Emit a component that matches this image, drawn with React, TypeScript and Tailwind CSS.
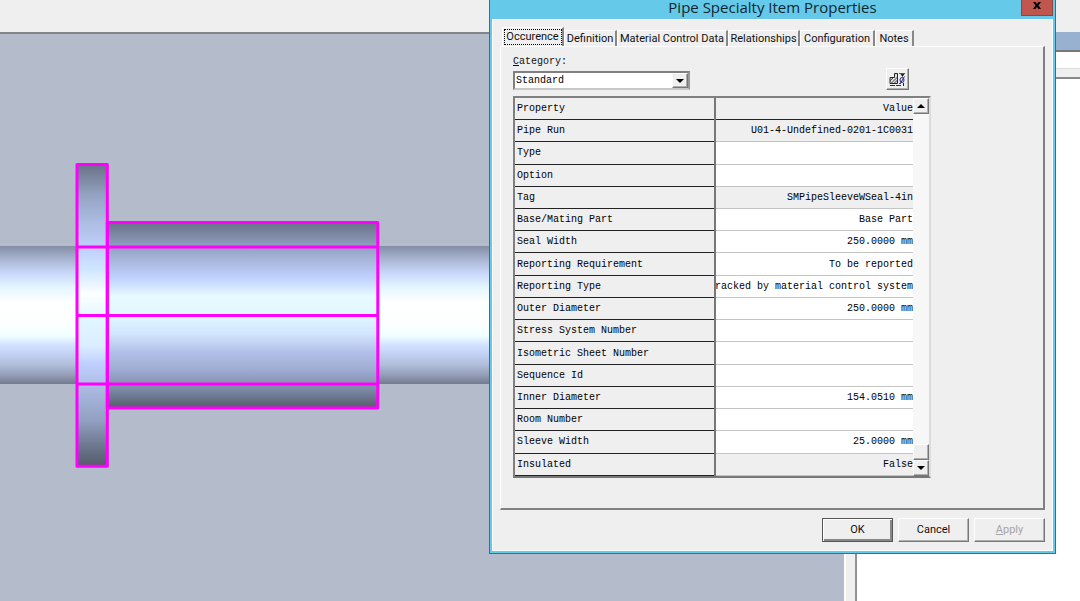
import React, { useState } from "react";

type CellKind = "readonly" | "text" | "choice";

interface PropertyRow {
  name: string;
  value: string;
  kind: CellKind;
}

const TABS = [
  { name: "Occurence", width: "w-[62px]" },
  { name: "Definition", width: "w-[53px]" },
  { name: "Material Control Data", width: "w-[111px]" },
  { name: "Relationships", width: "w-[72px]" },
  { name: "Configuration", width: "w-[75px]" },
  { name: "Notes", width: "w-[39px]" },
];

const ROWS: PropertyRow[] = [
  { name: "Pipe Run", value: "U01-4-Undefined-0201-1C0031", kind: "readonly" },
  { name: "Type", value: "", kind: "text" },
  { name: "Option", value: "", kind: "text" },
  { name: "Tag", value: "SMPipeSleeveWSeal-4in", kind: "readonly" },
  { name: "Base/Mating Part", value: "Base Part", kind: "choice" },
  { name: "Seal Width", value: "250.0000 mm", kind: "text" },
  { name: "Reporting Requirement", value: "To be reported", kind: "choice" },
  {
    name: "Reporting Type",
    value: "tracked by material control system",
    kind: "choice",
  },
  { name: "Outer Diameter", value: "250.0000 mm", kind: "text" },
  { name: "Stress System Number", value: "", kind: "text" },
  { name: "Isometric Sheet Number", value: "", kind: "text" },
  { name: "Sequence Id", value: "", kind: "text" },
  { name: "Inner Diameter", value: "154.0510 mm", kind: "text" },
  { name: "Room Number", value: "", kind: "text" },
  { name: "Sleeve Width", value: "25.0000 mm", kind: "text" },
  { name: "Insulated", value: "False", kind: "readonly" },
];

const MONO = "font-['Liberation_Mono',monospace] text-[10px]";
const RAISED =
  "border border-t-white border-l-white border-r-[#777] border-b-[#777] shadow-[inset_-1px_-1px_0_#b0b0b0]";

const Stops = ({ list }: { list: [number, string][] }) => (
  <>
    {list.map(([offset, color]) => (
      <stop key={offset} offset={offset} stopColor={color} />
    ))}
  </>
);

// Pipe with the selected sleeve and its seal plate
const PipeView = () => (
  <svg className="block h-full w-full" aria-label="Pipe sleeve model">
    <defs>
      <linearGradient id="pipe" x1="0" y1="0" x2="0" y2="1">
        <Stops
          list={[
            [0, "#858da5"],
            [0.1, "#aab6d3"],
            [0.2, "#cad8fb"],
            [0.3, "#e4f6fe"],
            [0.41, "#ffffff"],
            [0.57, "#fcffff"],
            [0.65, "#f0ffff"],
            [0.72, "#d3e1ff"],
            [0.78, "#c3d2f4"],
            [0.86, "#b0bddb"],
            [0.94, "#939bb4"],
            [1, "#737a91"],
          ]}
        />
      </linearGradient>
      <linearGradient id="sleeve" x1="0" y1="0" x2="0" y2="1">
        <Stops
          list={[
            [0, "#677086"],
            [0.12, "#8d9bbb"],
            [0.2, "#a7b5d9"],
            [0.3, "#c0d1ff"],
            [0.4, "#e6fbff"],
            [0.5, "#e0f8fe"],
            [0.6, "#d3e5ff"],
            [0.7, "#b2c0e9"],
            [0.8, "#9daad0"],
            [0.9, "#7c89a5"],
            [1, "#555b6a"],
          ]}
        />
      </linearGradient>
      <linearGradient id="plate" x1="0" y1="0" x2="0" y2="1">
        <Stops
          list={[
            [0, "#677085"],
            [0.1, "#93a2c1"],
            [0.2, "#aebee5"],
            [0.28, "#bfd0fb"],
            [0.35, "#d0e6ff"],
            [0.43, "#fcffff"],
            [0.52, "#e0f6fe"],
            [0.6, "#dceeff"],
            [0.66, "#c0d0ff"],
            [0.75, "#a8b8df"],
            [0.85, "#919fc1"],
            [0.93, "#6e7990"],
            [1, "#545b69"],
          ]}
        />
      </linearGradient>
    </defs>
    <g transform="translate(0 -34)">
      <rect x="0" y="246" width="100%" height="138" fill="url(#pipe)" />
      <rect x="107" y="222" width="271" height="186" fill="url(#sleeve)" />
      <rect x="77" y="164" width="30" height="302" fill="url(#plate)" />
      <g fill="none" stroke="#ff00ff" strokeWidth="3" strokeLinejoin="round">
        <rect x="77" y="164.5" width="30.3" height="301.8" />
        <rect x="107.3" y="222.5" width="270.5" height="185.5" />
        <path d="M77 247H378M77 315.4H378M77 384H378" />
      </g>
    </g>
  </svg>
);

const Arrow = ({ down }: { down?: boolean }) => (
  <svg width="8" height="4" viewBox="0 0 8 4" aria-hidden="true">
    <path d={down ? "M0 0H8L4 4Z" : "M0 4H8L4 0Z"} fill="#000" />
  </svg>
);

const SectionIcon = () => (
  <svg width="17" height="15" viewBox="0 0 17 15" aria-hidden="true">
    <path d="M1 11.500V5.500H5.500V1.500H8.500V11.500Z" fill="#ddd" stroke="#222" />
    <path
      d="M1 9L4.500 5.500M2 11.500L8.500 5M5 11.500L8.500 8"
      stroke="#444"
      fill="none"
    />
    <path d="M10 1.500H16M10 11.500H12" stroke="#555" fill="none" />
    <path d="M11.500 2H15.500L13.500 5Z" fill="#222" />
    <ellipse cx="13" cy="8" rx="2" ry="2.500" fill="none" stroke="#22228a" />
    <path d="M11 12L15.500 4.500" stroke="#22228a" />
    <path d="M1 13.500H12" stroke="#22228a" strokeDasharray="5 1" />
    <path d="M14.500 11V14" stroke="#222" />
  </svg>
);

const ValueCell = ({ row }: { row: PropertyRow }) => {
  const [value, setValue] = useState(row.value);

  if (row.kind === "text") {
    return (
      <input
        type="text"
        aria-label={row.name}
        value={value}
        onChange={(e) => setValue(e.target.value)}
        className="block w-full bg-transparent text-right outline-none"
      />
    );
  }
  if (row.kind === "choice") {
    return (
      <button
        type="button"
        aria-label={row.name}
        className="flex w-full justify-end overflow-hidden whitespace-nowrap"
      >
        {value}
      </button>
    );
  }
  return <div className="text-right whitespace-nowrap">{value}</div>;
};

const PropertyGrid = () => (
  <div className="flex w-[418px] border-2 border-t-[#808080] border-l-[#808080] border-r-[#dcdcdc] border-b-[#777] bg-[#efefef]">
    <div className="min-w-0 flex-1">
      <table
        className={`h-[378px] w-full table-fixed border-collapse leading-[14px] text-black ${MONO}`}
      >
        <colgroup>
          <col className="w-[200px]" />
          <col />
        </colgroup>
        <tbody>
          <tr className="border-b border-[#222]">
            <th
              scope="col"
              className="border-r-2 border-[#777] p-0 pt-px pl-[2px] text-left font-normal"
            >
              Property
            </th>
            <th scope="col" className="p-0 pt-px text-right font-normal">
              Value
            </th>
          </tr>
          {ROWS.map((row) => (
            <tr key={row.name}>
              <th
                scope="row"
                className="border-r-2 border-b border-r-[#777] border-b-[#222] p-0 pt-px pl-[2px] text-left font-normal whitespace-nowrap"
              >
                {row.name}
              </th>
              <td
                className={`border-b border-[#c4c4c4] p-0 pt-px ${
                  row.kind === "readonly" ? "bg-[#efefef]" : "bg-white"
                }`}
              >
                <ValueCell row={row} />
              </td>
            </tr>
          ))}
        </tbody>
      </table>
    </div>
    <div className="flex w-4 flex-col bg-[#f7f7f7]">
      <button
        type="button"
        aria-label="Scroll up"
        className={`flex h-4 items-center justify-center bg-[#efefef] ${RAISED}`}
      >
        <Arrow />
      </button>
      <div className="flex-1" />
      <div className={`h-4 bg-[#efefef] ${RAISED}`} />
      <button
        type="button"
        aria-label="Scroll down"
        className={`flex h-4 items-center justify-center bg-[#efefef] ${RAISED}`}
      >
        <Arrow down />
      </button>
    </div>
  </div>
);

const PropertiesDialog = () => {
  const [activeTab, setActiveTab] = useState("Occurence");
  const [category, setCategory] = useState("Standard");

  return (
    <section
      role="dialog"
      aria-labelledby="dialog-title"
      className="absolute top-0 left-[489px] w-[567px] border border-t-0 border-[#466c7c] bg-[#65c9ea] px-[2px] pb-[2px] font-['Roboto','Noto_Sans',sans-serif] text-[11px] text-[#111]"
    >
      <header className="relative flex h-[19px] justify-center">
        <h1
          id="dialog-title"
          className="font-['Open_Sans',sans-serif] text-[15px] leading-[15px] text-[#10262e]"
        >
          Pipe Specialty Item Properties
        </h1>
        <button
          type="button"
          aria-label="Close"
          className="absolute top-0 right-0 flex h-4 w-8 items-start justify-center border border-t-0 border-[#8f4640] bg-[#c1564f] pt-[2px]"
        >
          <svg width="8" height="7" viewBox="0 0 8 7" aria-hidden="true">
            <path d="M0 0H2.5L4 2L5.500 0H8L5.500 3.500L8 7H5.500L4 5L2.500 7H0L2.500 3.500Z" />
          </svg>
        </button>
      </header>

      <div className="border border-white bg-[#efefef] pt-[7px] pr-[7px] pb-2 pl-[7px]">
        <div role="tablist" className="flex h-[19px] items-end pl-[2px]">
          {TABS.map((tab) => (
            <button
              key={tab.name}
              type="button"
              role="tab"
              aria-selected={tab.name === activeTab}
              onClick={() => setActiveTab(tab.name)}
              className={`flex items-center justify-center border-t border-l border-r-2 border-t-white border-l-white border-r-[#888] leading-[14px] whitespace-nowrap ${
                tab.width
              } ${tab.name === activeTab ? "h-[19px]" : "h-4"}`}
            >
              {tab.name === activeTab ? (
                <span className="flex h-4 w-[58px] items-center justify-center border border-dotted border-black">
                  {tab.name}
                </span>
              ) : (
                tab.name
              )}
            </button>
          ))}
        </div>

        <div
          role="tabpanel"
          className="border-t border-r-2 border-b-2 border-l border-t-white border-r-[#808080] border-b-[#808080] border-l-white pt-2 pb-[30px] pl-3"
        >
          <div className="flex w-[418px] items-end justify-between pb-[6px]">
            <div>
              <label
                htmlFor="category"
                className={`block pb-[3px] leading-[13px] ${MONO}`}
              >
                <u>C</u>ategory:
              </label>
              <div className="relative w-[177px]">
                <select
                  id="category"
                  value={category}
                  onChange={(e) => setCategory(e.target.value)}
                  className={`block h-[19px] w-full appearance-none rounded-none border-2 border-t-[#808080] border-r-[#999] border-b-[#c8c8c8] border-l-[#808080] bg-white pl-px leading-[14px] text-black ${MONO}`}
                >
                  <option>Standard</option>
                </select>
                <span
                  className={`pointer-events-none absolute top-[2px] right-[2px] flex h-[15px] w-4 items-center justify-center bg-[#efefef] ${RAISED}`}
                >
                  <Arrow down />
                </span>
              </div>
            </div>
            <button
              type="button"
              aria-label="Section properties"
              className={`mr-[22px] flex h-[22px] w-[23px] items-center justify-center bg-[#efefef] ${RAISED}`}
            >
              <SectionIcon />
            </button>
          </div>
          <PropertyGrid />
        </div>

        <footer className="flex justify-end gap-[5px] pt-2">
          <button
            type="button"
            className="h-6 w-[71px] border border-[#555] shadow-[inset_1px_1px_0_#fff,inset_-2px_-2px_0_#888]"
          >
            OK
          </button>
          <button type="button" className={`h-6 w-[71px] ${RAISED}`}>
            Cancel
          </button>
          <button
            type="button"
            disabled
            className={`h-6 w-[71px] text-[#a5a5a5] ${RAISED}`}
          >
            <u>A</u>pply
          </button>
        </footer>
      </div>
    </section>
  );
};

const App: React.FC = () => {
  return (
    <div className="relative flex h-screen flex-col overflow-hidden bg-[#efefef]">
      <header className="h-8" />
      <div className="flex min-h-0 flex-1">
        <main className="min-w-0 flex-1 border-t-2 border-[#858489] bg-[#b4bbcb]">
          <PipeView />
        </main>
        <div className="w-[13px] border-r-2 border-l-2 border-r-[#929292] border-l-white" />
        <aside className="flex w-[223px] flex-col bg-white">
          <div className="h-[18px] bg-[#98b1d1]" />
          <div className="h-[18px] border-t-2 border-[#777]" />
          <div className="h-[11px] border-t border-b-2 border-t-[#ddd] border-b-[#888] bg-[#efefef]" />
        </aside>
      </div>
      <PropertiesDialog />
    </div>
  );
};

export default App;
